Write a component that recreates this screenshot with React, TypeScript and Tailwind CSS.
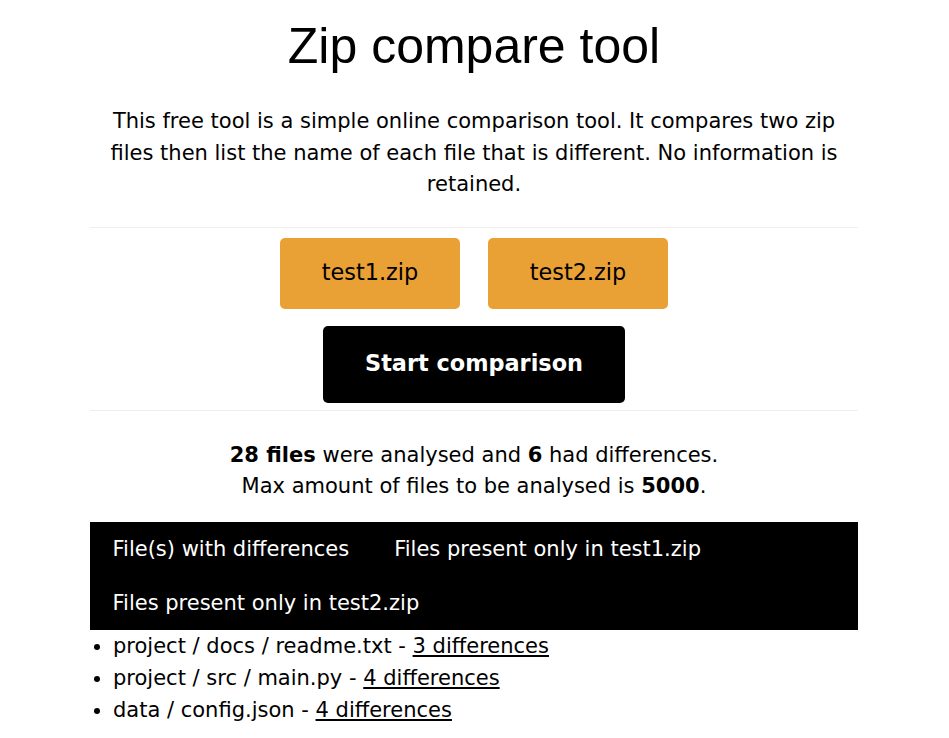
import React from "react";

const body = { fontFamily: '"DejaVu Sans", sans-serif' };

export default function App() {
  return (
    <div className="bg-white text-black" style={body}>
      <div className="ml-[90px] w-[768px]">
        <h1
          className="pt-[18px] text-center text-[50px] leading-[56px] font-normal"
          style={{ fontFamily: '"Liberation Sans", Arial, sans-serif' }}
        >
          Zip compare tool
        </h1>
        <p className="mt-[32px] px-[20px] text-center text-[21px] leading-[31.5px]">
          This free tool is a simple online comparison tool. It compares two zip files then list the name of each file that is different. No information is retained.
        </p>
        <div className="mt-[26px] h-px bg-[#eeeeee]" />
        <div className="mt-[10px] flex justify-center gap-[28px]">
          <button className="h-[71px] w-[180px] rounded-[5px] bg-[#E9A135] text-[22.4px] text-black">
            test1.zip
          </button>
          <button className="h-[71px] w-[180px] rounded-[5px] bg-[#E9A135] text-[22.4px] text-black">
            test2.zip
          </button>
        </div>
        <div className="mt-[17px] flex justify-center">
          <button className="h-[77px] w-[302px] rounded-[5px] bg-black text-[22.4px] font-bold text-white">
            Start comparison
          </button>
        </div>
        <div className="mt-[7px] h-px bg-[#eeeeee]" />
        <div className="mt-[29px] text-center text-[21px] leading-[31px]">
          <div>
            <b>28 files</b> were analysed and <b>6</b> had differences.
          </div>
          <div>
            Max amount of files to be analysed is <b>5000</b>.
          </div>
        </div>
        <div className="mt-[20px] flex flex-wrap bg-black text-[21px] leading-[32px] text-white">
          <div className="px-[22.5px] py-[11px]">File(s) with differences</div>
          <div className="px-[22.5px] py-[11px]">Files present only in test1.zip</div>
          <div className="px-[22.5px] py-[11px]">Files present only in test2.zip</div>
        </div>
        <ul className="list-disc pl-[23px] text-[21px] leading-[32px]">
          <li>
            project / docs / readme.txt - <a className="underline" href="#">3 differences</a>
          </li>
          <li>
            project / src / main.py - <a className="underline" href="#">4 differences</a>
          </li>
          <li>
            data / config.json - <a className="underline" href="#">4 differences</a>
          </li>
        </ul>
      </div>
    </div>
  );
}
